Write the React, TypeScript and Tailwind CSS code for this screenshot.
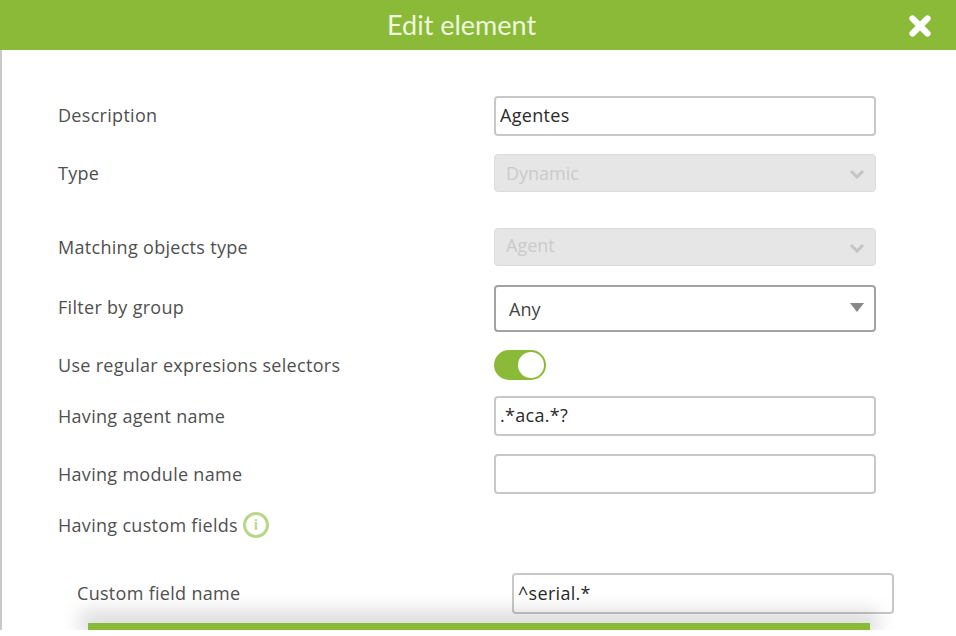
import { X } from 'lucide-react';

const labelClass = 'text-[18px] tracking-[0.3px] text-[#505050]';
const inputClass = 'w-[382px] rounded-[4px] border-2 border-[#c8c8c8] bg-white px-1 pb-[2px] text-[18px] tracking-[0.3px] text-[#2a2a2a] outline-none';

const Chevron = () => (
  <svg width="16" height="10" viewBox="0 0 16 10" className="absolute right-[10px] top-[14px]">
    <path d="M2 2l6 6 6-6" fill="none" stroke="#c4c4c4" strokeWidth="3" />
  </svg>
);

const DisabledSelect = ({ value, lift }: { value: string; lift?: boolean }) => (
  <div className={`relative flex h-[38px] w-[382px] items-center rounded-[4px] border border-[#dcdcdc] bg-[#e6e6e6] pl-[11px] text-[18px] text-[#cacaca] ${lift ? 'pb-[4px]' : ''}`}>
    {value}
    <Chevron />
  </div>
);

export default function App() {
  return (
    <div className="h-[636px] w-[956px] overflow-hidden bg-white font-['Open_Sans',sans-serif]">
      <header className="relative flex h-[50px] items-center bg-[#8aba38] pl-[387px]">
        <span className="font-['Lato',sans-serif] text-[27px] text-[#eef6de]">Edit element</span>
        <X className="absolute left-[905px] top-[11px] h-[30px] w-[30px] text-white" strokeWidth={5} />
      </header>

      <div className="h-[580px] overflow-hidden border-l-2 border-[#c8c8c8] pl-[56px] pt-[46px]">
        <div className="flex h-[40px] items-center">
          <span className={`w-[436px] pb-[2px] ${labelClass}`}>Description</span>
          <input readOnly value="Agentes" className={`h-[40px] ${inputClass}`} />
        </div>
        <div className="mt-[18px] flex items-center">
          <span className={`w-[436px] ${labelClass}`}>Type</span>
          <DisabledSelect value="Dynamic" />
        </div>
        <div className="mt-[36px] flex items-center">
          <span className={`w-[436px] ${labelClass}`}>Matching objects type</span>
          <DisabledSelect value="Agent" lift />
        </div>
        <div className="mt-[19px] flex items-center">
          <span className={`w-[436px] pb-[2px] ${labelClass}`}>Filter by group</span>
          <div className="relative flex h-[47px] w-[382px] items-center rounded-[4px] border-2 border-[#a2a2a2] pl-[13px] pt-[2px] text-[18px] text-[#444]">
            Any
            <svg width="14" height="9" viewBox="0 0 14 9" className="absolute right-[10px] top-[16px]">
              <path d="M0 0h14L7 9z" fill="#888888" />
            </svg>
          </div>
        </div>
        <div className="mt-[18px] flex items-center">
          <span className={`w-[436px] ${labelClass}`}>Use regular expresions selectors</span>
          <div className="flex h-[30px] w-[52px] items-center justify-end rounded-full bg-[#8aba38] pr-[2px]">
            <div className="h-[26px] w-[26px] rounded-full bg-white" />
          </div>
        </div>
        <div className="mt-[16px] flex items-center">
          <span className={`w-[436px] ${labelClass}`}>Having agent name</span>
          <input readOnly value=".*aca.*?" className={`h-[40px] ${inputClass}`} />
        </div>
        <div className="mt-[18px] flex items-center">
          <span className={`w-[436px] ${labelClass}`}>Having module name</span>
          <input readOnly className={`h-[40px] ${inputClass}`} />
        </div>
        <div className="mt-[16px] flex h-[30px] items-center">
          <span className={labelClass}>Having custom fields</span>
          <span className="ml-[5px] flex h-[26px] w-[26px] items-center justify-center rounded-full border-[3px] border-[#b9d68a] text-[14px] font-bold leading-none text-[#b9d68a]">i</span>
        </div>
        <div className="ml-[19px] mt-[33px] flex items-center">
          <span className={`w-[435px] ${labelClass}`}>Custom field name</span>
          <input readOnly value="^serial.*" className={`h-[41px] ${inputClass}`} />
        </div>
        <div className="relative ml-[30px] mt-[9px] h-[8px] w-[782px] bg-[#8aba38] shadow-[0_-4px_20px_8px_rgba(0,0,0,0.15)]" />
      </div>
    </div>
  );
}
